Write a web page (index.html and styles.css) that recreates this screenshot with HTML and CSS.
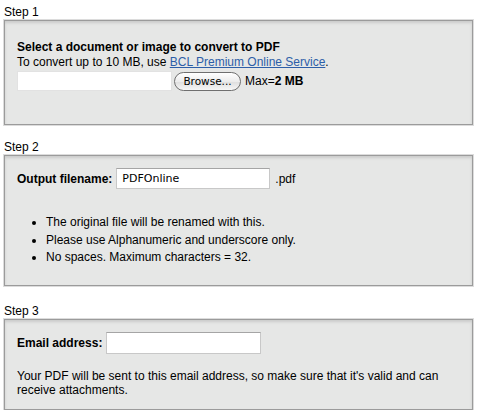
FILE: index.html
```html
<!DOCTYPE html>
<html>
<head>
<meta charset="utf-8">
<link rel="stylesheet" href="styles.css">
</head>
<body>
<div class="page">
  <div class="step-label">Step 1</div>
  <div class="panel panel-1">
    <div class="title">Select a document or image to convert to PDF</div>
    <div class="line">To convert up to 10 MB, use <a href="#">BCL Premium Online Service</a>.</div>
    <div class="file-row">
      <input class="field file-field" type="text">
      <button class="browse" type="button">Browse...</button>
      <span class="max">Max=<b>2 MB</b></span>
    </div>
  </div>

  <div class="step-label step-gap">Step 2</div>
  <div class="panel panel-2">
    <div class="row">
      <b class="lbl">Output filename:</b>
      <input class="field name-field" type="text" value="PDFOnline">
      <span class="ext">.pdf</span>
    </div>
    <ul class="notes">
      <li>The original file will be renamed with this.</li>
      <li>Please use Alphanumeric and underscore only.</li>
      <li>No spaces. Maximum characters = 32.</li>
    </ul>
  </div>

  <div class="step-label step-gap3">Step 3</div>
  <div class="panel panel-3">
    <div class="row">
      <b class="lbl">Email address:</b>
      <input class="field mail-field" type="text">
    </div>
    <p class="info">Your PDF will be sent to this email address, so make sure that it's valid and can receive attachments.</p>
  </div>
</div>
</body>
</html>
```

FILE: styles.css
```css
html, body {
  margin: 0;
  padding: 0;
  background: #ffffff;
}
body {
  font-family: "Liberation Sans", Arial, Helvetica, sans-serif;
  font-size: 12px;
  color: #000;
}
.page {
  padding: 5px 6px 0 4px;
  display: flex;
  flex-direction: column;
}
.step-label {
  line-height: 14px;
  height: 15px;
}
.step-gap { margin-top: 15px; }
.step-gap3 { margin-top: 18px; }
.panel {
  background: #e6e7e6;
  border: 1px solid #9b9b9b;
  box-shadow: 0 0 0 1px #dcdcdc, inset 0 2px 3px rgba(0,0,0,0.12);
  padding: 0 12px;
}
.panel-1 {
  padding-top: 19px;
  height: 84px;
}
.title {
  font-weight: bold;
  line-height: 14px;
}
.line {
  line-height: 14px;
  margin-top: 1px;
}
.line a {
  color: #2d5ea8;
  text-decoration: underline;
}
.file-row {
  display: flex;
  align-items: center;
  margin-top: 2px;
  height: 20px;
}
.field {
  box-sizing: border-box;
  background: #fff;
  border: 1px solid #c8c8c8;
  border-top-color: #a5a5a5;
  margin: 0;
  padding: 0 5px;
  font-family: "DejaVu Sans", "Lucida Grande", sans-serif;
  font-size: 11px;
  color: #000;
  outline: none;
}
.file-field {
  width: 155px;
  height: 20px;
  border-color: #e2e2e2;
}
.browse {
  box-sizing: border-box;
  margin-left: 2px;
  height: 19px;
  width: 67px;
  padding: 0;
  border: 1px solid #6f6f6f;
  border-radius: 10px;
  background: linear-gradient(#ffffff, #ececec 50%, #dedede 51%, #f6f6f6);
  font-family: "DejaVu Sans", "Lucida Grande", sans-serif;
  font-size: 10.5px;
  color: #000;
}
.max {
  margin-left: 4px;
}
.panel-2 {
  padding-top: 12px;
  height: 117px;
}
.row {
  display: flex;
  align-items: center;
  height: 21px;
}
.lbl {
  margin-right: 4px;
}
.name-field {
  width: 154px;
  height: 21px;
}
.ext {
  margin-left: 5px;
}
.notes {
  margin: 25px 0 0 0;
  padding: 0 0 0 29px;
  line-height: 17.5px;
}
.notes li {
  list-style: disc;
}
.panel-3 {
  padding-top: 12px;
  height: 77px;
}
.mail-field {
  width: 155px;
  height: 22px;
}
.info {
  margin: 16px 0 0 0;
  line-height: 14px;
}
```
